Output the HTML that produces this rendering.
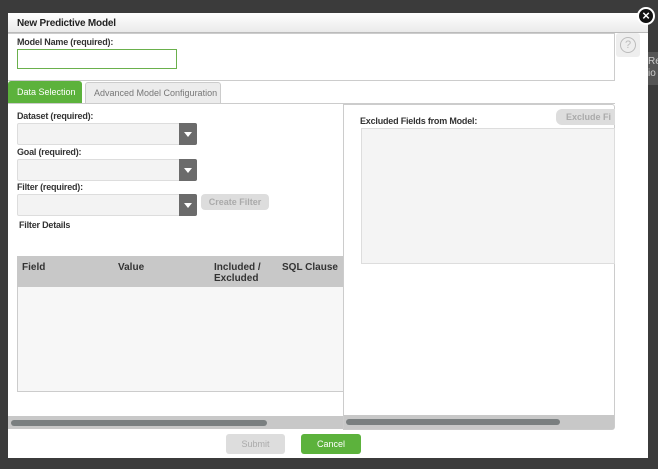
<!DOCTYPE html>
<html><head><style>
*{box-sizing:border-box;margin:0;padding:0}
body{width:658px;height:469px;background:#3b3b3b;font-family:"Liberation Sans",sans-serif;position:relative;overflow:hidden;font-size:9px;color:#222}
.a{position:absolute}
.lbl{font-size:9px;font-weight:bold;color:#333;letter-spacing:-0.2px}
.sel{background:#f3f3f3;border:1px solid #ddd;border-radius:2px}
.arr{background:#6b6b6b;border-radius:0 2px 2px 0}
.arr:after{content:"";position:absolute;left:5px;top:9px;border-left:4px solid transparent;border-right:4px solid transparent;border-top:5px solid #fff}
</style></head><body>
<div class="a" style="left:8px;top:13px;width:640px;height:445px;background:#fff"></div>
<div class="a" style="left:8px;top:13px;width:640px;height:20px;background:linear-gradient(#fff,#eaeaea);border-bottom:1px solid #bbb"></div>
<div class="a lbl" style="left:17px;top:18px;font-size:10px;color:#222">New Predictive Model</div>
<div class="a" style="left:637px;top:7px;width:18px;height:18px;border-radius:50%;background:#111;border:2px solid #fff;color:#fff;font-weight:bold;font-size:13px;line-height:13px;text-align:center">×</div>
<div class="a" style="left:648px;top:52px;width:10px;height:33px;background:#555;color:#ccc;font-size:10px;line-height:12px;padding-top:4px">Re<br>io</div>
<div class="a" style="left:8px;top:33px;width:607px;height:48px;border:1px solid #ccc;border-left:none"></div>
<div class="a lbl" style="left:17px;top:37px">Model Name (required):</div>
<div class="a" style="left:17px;top:49px;width:160px;height:20px;border:1px solid #6ab04c"></div>
<div class="a" style="left:616px;top:33px;width:24px;height:24px;background:#eee;border-radius:3px"><div style="margin:4px;width:16px;height:16px;border:1px solid #bbb;border-radius:50%;color:#bbb;text-align:center;font-size:11px;line-height:14px">?</div></div>
<div class="a" style="left:8px;top:81px;width:74px;height:23px;background:#5cb23c;color:#fff;border-radius:3px 3px 0 0;font-size:9px;line-height:23px;padding-left:9px">Data Selection</div>
<div class="a" style="left:85px;top:82px;width:136px;height:22px;background:#ececec;border:1px solid #ccc;border-bottom:none;color:#777;border-radius:3px 3px 0 0;font-size:9px;line-height:20px;padding-left:8px">Advanced Model Configuration</div>
<div class="a" style="left:8px;top:103px;width:607px;height:1px;background:#ccc"></div>
<div class="a lbl" style="left:17px;top:111px">Dataset (required):</div>
<div class="a sel" style="left:17px;top:123px;width:180px;height:22px"></div><div class="a arr" style="left:179px;top:123px;width:18px;height:22px"></div>
<div class="a lbl" style="left:17px;top:147px">Goal (required):</div>
<div class="a sel" style="left:17px;top:159px;width:180px;height:22px"></div><div class="a arr" style="left:179px;top:159px;width:18px;height:22px"></div>
<div class="a lbl" style="left:17px;top:182px">Filter (required):</div>
<div class="a sel" style="left:17px;top:194px;width:180px;height:22px"></div><div class="a arr" style="left:179px;top:194px;width:18px;height:22px"></div>
<div class="a" style="left:201px;top:194px;width:68px;height:16px;background:#ddd;border-radius:4px;color:#aaa;font-weight:bold;font-size:9px;text-align:center;line-height:16px">Create Filter</div>
<div class="a lbl" style="left:19px;top:220px">Filter Details</div>
<div class="a" style="left:17px;top:256px;width:326px;height:136px;background:#f7f7f7;border:1px solid #ccc;border-top:none;border-right:none"></div>
<div class="a" style="left:17px;top:256px;width:326px;height:31px;background:#c8c8c8;font-weight:bold;font-size:10px;color:#333"><span class="a" style="left:5px;top:6px">Field</span><span class="a" style="left:101px;top:6px">Value</span><span class="a" style="left:197px;top:6px;line-height:11px">Included /<br>Excluded</span><span class="a" style="left:265px;top:6px">SQL Clause</span></div>
<div class="a" style="left:343px;top:104px;width:272px;height:326px;border:1px solid #ccc;border-top:1px solid #ccc;border-radius:0 3px 3px 0"></div>
<div class="a lbl" style="left:360px;top:116px">Excluded Fields from Model:</div>
<div class="a" style="left:556px;top:109px;width:59px;height:16px;background:#ddd;border-radius:6px 0 0 6px;color:#aaa;font-weight:bold;font-size:9px;line-height:16px;padding-left:10px;overflow:hidden;white-space:nowrap">Exclude Fi</div>
<div class="a" style="left:361px;top:128px;width:254px;height:136px;background:#f4f4f4;border:1px solid #ddd"></div>
<div class="a" style="left:8px;top:416px;width:335px;height:13px;background:#c8c8c8"></div>
<div class="a" style="left:11px;top:420px;width:256px;height:6px;background:#7a7f80;border-radius:3px"></div>
<div class="a" style="left:344px;top:415px;width:270px;height:14px;background:#c8c8c8"></div>
<div class="a" style="left:346px;top:419px;width:214px;height:6px;background:#7a7f80;border-radius:3px"></div>
<div class="a" style="left:226px;top:434px;width:59px;height:20px;background:#ddd;border-radius:3px;color:#aaa;text-align:center;line-height:20px;font-size:9px">Submit</div>
<div class="a" style="left:301px;top:434px;width:60px;height:20px;background:#5cb23c;border-radius:3px;color:#fff;text-align:center;line-height:20px;font-size:9px">Cancel</div>
</body></html>
